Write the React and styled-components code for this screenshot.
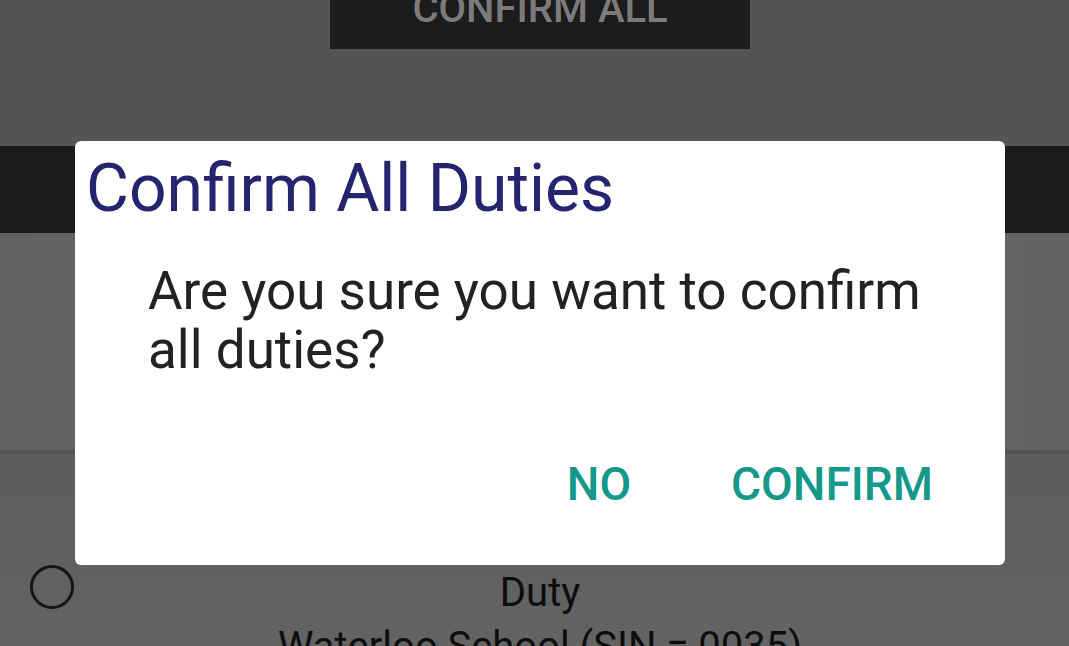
import React from "react";
import styled, { createGlobalStyle } from "styled-components";

const GlobalStyle = createGlobalStyle`
  html, body {
    margin: 0;
    padding: 0;
    width: 1069px;
    height: 646px;
    overflow: hidden;
    background: #5e5e5e;
    font-family: Roboto, "Noto Sans", "Liberation Sans", sans-serif;
  }
  * { box-sizing: border-box; }
`;

const Screen = styled.div`
  position: relative;
  width: 1069px;
  height: 646px;
  overflow: hidden;
  display: flex;
  flex-direction: column;
  & > * { flex-shrink: 0; }
`;

const Header = styled.div`
  height: 146px;
  padding-left: 11px;
  background: #545454;
  display: flex;
  justify-content: center;
  align-items: flex-start;
  overflow: hidden;
`;

const ConfirmAllButton = styled.div`
  width: 420px;
  height: 86px;
  margin-top: -37px;
  background: #1c1c1c;
  color: #7b7b7b;
  font-size: 40px;
  font-weight: 500;
  display: flex;
  align-items: center;
  justify-content: center;
  padding-top: 4px;
`;

const TitleBar = styled.div`
  height: 87px;
  background: #1b1b1b;
`;

const Summary = styled.div`
  height: 217px;
  background: linear-gradient(90deg, #626262, #666666 50%, #636363);
`;

const Divider = styled.div`
  height: 4px;
  background: #545454;
`;

const DutyRow = styled.div`
  position: relative;
  height: 192px;
  overflow: hidden;
  background: linear-gradient(180deg, #5d5d5d, #636363);
  display: flex;
  flex-direction: column;
  align-items: center;
  padding: 112px 0 0 11px;
`;

const RadioMark = styled.div`
  position: absolute;
  left: 30px;
  top: 111px;
  width: 44px;
  height: 44px;
  border-radius: 50%;
  border: 3px solid #151515;
`;

const DutyLine = styled.div`
  color: #0d0d0d;
  font-size: 40px;
  line-height: 54px;
  white-space: nowrap;
`;

const Dialog = styled.div`
  position: absolute;
  left: 75px;
  top: 141px;
  width: 930px;
  height: 424px;
  background: #ffffff;
  border-radius: 6px;
  display: flex;
  flex-direction: column;
`;

const DialogTitle = styled.h2`
  margin: 0;
  padding: 12px 0 0 11px;
  color: #24246f;
  font-size: 66px;
  font-weight: 400;
  line-height: 72px;
`;

const DialogBody = styled.p`
  margin: 0;
  padding: 37px 72px 0 73px;
  color: #222222;
  font-size: 53px;
  font-weight: 400;
  line-height: 59px;
`;

const Actions = styled.div`
  display: flex;
  justify-content: flex-end;
  gap: 100px;
  padding: 79px 72px 0 0;
`;

const ActionButton = styled.button`
  border: none;
  background: none;
  padding: 0;
  color: #13988a;
  font-family: inherit;
  font-size: 46px;
  font-weight: 500;
  line-height: 50px;
  cursor: pointer;
`;

export default function App() {
  return (
    <>
      <GlobalStyle />
      <Screen>
        <Header>
          <ConfirmAllButton>CONFIRM ALL</ConfirmAllButton>
        </Header>
        <TitleBar />
        <Summary />
        <Divider />
        <DutyRow>
          <RadioMark />
          <DutyLine>Duty</DutyLine>
          <DutyLine>Waterloo School (SIN = 0035)</DutyLine>
        </DutyRow>
        <Dialog role="dialog">
          <DialogTitle>Confirm All Duties</DialogTitle>
          <DialogBody>Are you sure you want to confirm all duties?</DialogBody>
          <Actions>
            <ActionButton>NO</ActionButton>
            <ActionButton>CONFIRM</ActionButton>
          </Actions>
        </Dialog>
      </Screen>
    </>
  );
}
